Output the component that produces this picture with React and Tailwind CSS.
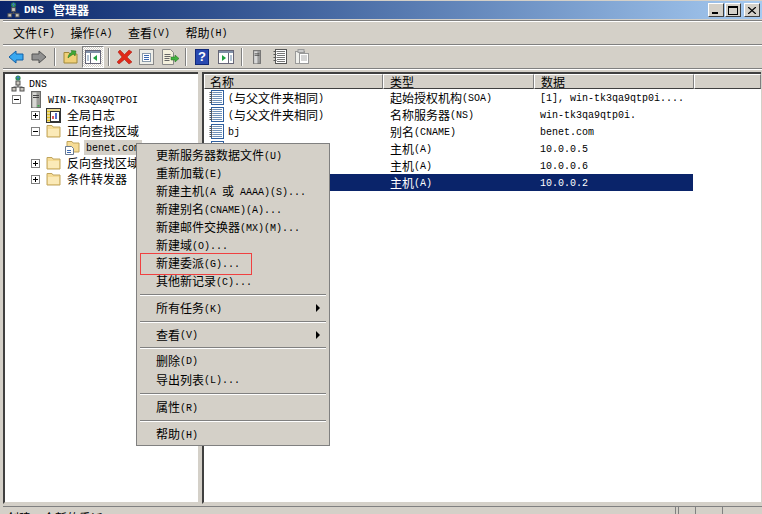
import React from 'react';

const CJK = '"Noto Sans CJK SC", sans-serif';

// CJK glyphs are 12px wide, latin ones 6px: two sizes in one string
function T({ children }) {
  const parts = children.split(/([\u4e00-\u9fff]+)/).filter(Boolean);
  return (
    <span className="inline-flex items-center whitespace-pre leading-[12px]">
      {parts.map((p, i) =>
        /[\u4e00-\u9fff]/.test(p)
          ? <span key={i} className="font-['Noto_Sans_CJK_SC',sans-serif] text-[12px]">{p}</span>
          : <span key={i} className="font-['Liberation_Mono',monospace] text-[10px] mt-[3px]">{p}</span>
      )}
    </span>
  );
}

function DnsIcon({ className }) {
  return (
    <svg viewBox="0 0 14 17" className={className}>
      <circle cx="7" cy="3" r="2.6" fill="#2f8f4f" />
      <path d="M5.5 2.5h3M7 .8v4" stroke="#3a78c8" strokeWidth="1" />
      <rect x="5" y="6" width="4" height="4" fill="#c8c4bc" stroke="#555" />
      <path d="M7 10v2M2.5 12h9" stroke="#555" />
      <rect x="1" y="12.5" width="4" height="3.5" fill="#c8c4bc" stroke="#555" />
      <rect x="9" y="12.5" width="4" height="3.5" fill="#c8c4bc" stroke="#555" />
    </svg>
  );
}

function ServerIcon({ className }) {
  return (
    <svg viewBox="0 0 10 17" className={className}>
      <rect x=".5" y=".5" width="9" height="16" fill="#9a9a96" stroke="#6a6a68" />
      <rect x="1.5" y="1.5" width="4" height="15" fill="#d8d8d4" />
      <path d="M2 4.500h6M2 6.500h6" stroke="#444" />
      <rect x="6.5" y="14" width="2" height="1.5" fill="#38b048" />
    </svg>
  );
}

function FolderIcon({ className }) {
  return (
    <svg viewBox="0 0 15 14" className={className}>
      <path d="M1 3V1.5h5L7 3h7v10H1z" fill="#f6dc96" stroke="#c0a45c" />
      <path d="M2 5h11v7H2z" fill="#fbeab8" />
    </svg>
  );
}

function DocFolderIcon({ className }) {
  return (
    <svg viewBox="0 0 15 15" className={className}>
      <path d="M2 3V1.5h5L8 3h6v9H2z" fill="#f6dc96" stroke="#c0a45c" />
      <path d="M.5 6.5h6l2 2v6h-8z" fill="#fff" stroke="#6a7a90" />
      <path d="M2 10.500h4M2 12.500h4" stroke="#3a68b0" />
    </svg>
  );
}

function LogIcon({ className }) {
  return (
    <svg viewBox="0 0 15 15" className={className}>
      <rect x=".5" y=".5" width="14" height="14" fill="#e8d890" stroke="#333" />
      <rect x="4.500" y="3.500" width="9" height="10" fill="#fff" stroke="#333" />
      <path d="M1 3.500h3M1 6.500h3M1 9.500h3M1 12.500h3" stroke="#e0c020" />
      <path d="M7 11V8" stroke="#d02020" strokeWidth="1.5" />
      <path d="M10 11V5" stroke="#2040c0" strokeWidth="1.5" />
    </svg>
  );
}

function RecordIcon({ className }) {
  return (
    <svg viewBox="0 0 15 15" className={className}>
      <rect x="2.5" y=".5" width="12" height="14" fill="#fff" stroke="#2f5f9f" />
      <path d="M4 2.500h9M4 4.500h9M4 6.500h9M4 8.500h9M4 10.500h9M4 12.500h9" stroke="#6f90b8" />
      <path d="M.5 2.500h3M.5 4.500h3M.5 6.500h3M.5 8.500h3M.5 10.500h3M.5 12.500h3" stroke="#555" />
    </svg>
  );
}

function Box({ open }) {
  return (
    <svg viewBox="0 0 9 9" className="w-[9px] h-[9px] shrink-0">
      <rect x=".5" y=".5" width="8" height="8" fill="#fff" stroke="#808080" />
      <path d="M2 4.500h5" stroke="#000" />
      {!open && <path d="M4.500 2v5" stroke="#000" />}
    </svg>
  );
}

function Sep() {
  return <div className="w-[2px] h-[18px] border-l border-l-[#808080] border-r border-r-white shrink-0" />;
}

const Arrow = ({ fill, stroke, flip }) => (
  <svg viewBox="0 0 16 14" className={`w-4 h-[14px] ${flip ? '-scale-x-100' : ''}`}>
    <path d="M1 7l7-6v3h7v6H8v3z" fill={fill} stroke={stroke} />
  </svg>
);

function Toolbar() {
  return (
    <div className="flex items-center h-[24px] pl-[5px] border-b border-b-[#808080] shadow-[0_1px_0_#fff]">
      <Arrow fill="#38a8f0" stroke="#1060a8" />
      <div className="w-[7px]" />
      <Arrow fill="#909090" stroke="#555" flip />
      <div className="w-[7px]" />
      <Sep />
      <svg viewBox="0 0 15 15" className="w-[15px] h-[15px] ml-[7px]">
        <path d="M1 5V3.5h5L7 5h7v9H1z" fill="#f0d078" stroke="#a08838" />
        <path d="M5 9c0-3 2-5 4-6L8 1.5l5 .5-1 5-1.5-2C9 6 7 7 5 9z" fill="#40a838" stroke="#207018" strokeWidth=".5" />
      </svg>
      <div className="w-[22px] h-[22px] ml-[4px] flex items-center justify-center border border-t-[#808080] border-l-[#808080] border-r-white border-b-white bg-[repeating-conic-gradient(#fff_0_25%,#d4d0c8_0_50%)] bg-[length:2px_2px]">
        <svg viewBox="0 0 16 14" className="w-4 h-[14px]">
          <rect x=".5" y=".5" width="15" height="13" fill="#fff" stroke="#667" />
          <rect x="1" y="1" width="14" height="2" fill="#8090a8" />
          <path d="M5.5 3v10" stroke="#667" />
          <path d="M2 6h2M2 8h2M2 10h2" stroke="#68a" />
          <path d="M12 5v6L8 8z" fill="#20a040" />
        </svg>
      </div>
      <div className="w-[4px]" />
      <Sep />
      <svg viewBox="0 0 17 16" className="w-[17px] h-4 ml-[6px]">
        <path d="M2 3l2-2 4.500 4.500L13 1l3 2-5 5 5 5-3 2-4.500-4.500L3 15l-2-2 5-5z" fill="#e02818" stroke="#a01810" strokeWidth=".5" />
      </svg>
      <svg viewBox="0 0 15 16" className="w-[15px] h-4 ml-[6px]">
        <rect x=".5" y=".5" width="14" height="15" fill="#eeeee8" stroke="#888" />
        <rect x="3.500" y="4.500" width="8" height="8" fill="#fff" stroke="#8899aa" />
        <path d="M5 6.500h5M5 8.500h5M5 10.500h5" stroke="#3a68b0" />
      </svg>
      <svg viewBox="0 0 17 16" className="w-[17px] h-4 ml-[8px]">
        <path d="M.5.5h8l3 3v12H.5z" fill="#f4f0dc" stroke="#888" />
        <path d="M2.500 5.500h6M2.500 7.500h6M2.500 9.500h5M2.500 11.500h5" stroke="#666" />
        <path d="M9 8h4V6l4 3.500-4 3.500v-2H9z" fill="#40b040" stroke="#207018" strokeWidth=".5" />
      </svg>
      <div className="w-[6px]" />
      <Sep />
      <div className="w-[14px] h-[16px] ml-[8px] bg-[#2848b0] border border-[#102878] flex items-center justify-center font-['Liberation_Sans',sans-serif] text-[13px] font-bold text-white leading-none">?</div>
      <svg viewBox="0 0 16 14" className="w-4 h-[14px] ml-[9px]">
        <rect x=".5" y=".5" width="15" height="13" fill="#fff" stroke="#667" />
        <rect x="1" y="1" width="14" height="2" fill="#8090a8" />
        <path d="M10.500 3v10" stroke="#667" />
        <path d="M4 5v6l4-3z" fill="#20a040" />
        <path d="M12 6h2M12 8h2M12 10h2" stroke="#68a" />
      </svg>
      <div className="w-[7px]" />
      <Sep />
      <ServerIcon className="w-[8px] h-[16px] ml-[10px] grayscale" />
      <svg viewBox="0 0 14 15" className="w-[14px] h-[15px] ml-[12px]">
        <rect x="2.500" y=".5" width="11" height="14" fill="#fff" stroke="#555" />
        <path d="M4 2.500h8M4 4.500h8M4 6.500h8M4 8.500h8M4 10.500h8M4 12.500h8" stroke="#777" />
        <path d="M.5 2.500h3M.5 5.500h3M.5 8.500h3M.5 11.500h3" stroke="#555" />
      </svg>
      <svg viewBox="0 0 14 15" className="w-[14px] h-[15px] ml-[8px]">
        <rect x=".5" y="2.500" width="9" height="12" fill="#f0f0ec" stroke="#999" />
        <rect x="4.500" y="4.500" width="9" height="10" fill="#fff" stroke="#999" />
        <rect x="3" y=".5" width="6" height="3" fill="#ccc" stroke="#999" />
        <path d="M6 7h6M6 9h6M6 11h6" stroke="#aaa" />
      </svg>
    </div>
  );
}

const treeRows = [
  { label: 'DNS', pl: 'pl-[6px]', icon: <DnsIcon className="w-[14px] h-[17px]" />, gap: 'gap-[4px]' },
  { label: 'WIN-TK3QA9QTPOI', pl: 'pl-[7px]', box: 'open', icon: <ServerIcon className="w-[10px] h-[17px]" />, gap: 'gap-[7px]', boxGap: 'mr-[10px]' },
  { label: '全局日志', pl: 'pl-[26px]', box: 'closed', icon: <LogIcon className="w-[15px] h-[15px]" />, gap: 'gap-[6px]', boxGap: 'mr-[6px]' },
  { label: '正向查找区域', pl: 'pl-[26px]', box: 'open', icon: <FolderIcon className="w-[15px] h-[14px]" />, gap: 'gap-[6px]', boxGap: 'mr-[6px]' },
  { label: 'benet.com', pl: 'pl-[60px]', icon: <DocFolderIcon className="w-[15px] h-[15px]" />, gap: 'gap-[4px]', sel: true },
  { label: '反向查找区域', pl: 'pl-[26px]', box: 'closed', icon: <FolderIcon className="w-[15px] h-[14px]" />, gap: 'gap-[6px]', boxGap: 'mr-[6px]' },
  { label: '条件转发器', pl: 'pl-[26px]', box: 'closed', icon: <FolderIcon className="w-[15px] h-[14px]" />, gap: 'gap-[6px]', boxGap: 'mr-[6px]' },
];

function Tree() {
  return (
    <div className="w-[195px] shrink-0 bg-white border-t-2 border-l-2 border-t-[#404040] border-l-[#404040] border-b-2 border-b-[#d4d0c8] overflow-hidden pt-[1px]">
      {treeRows.map(r => (
        <div key={r.label} className={`flex items-center h-[16px] whitespace-nowrap ${r.pl}`}>
          {r.box && <span className={`flex ${r.boxGap}`}><Box open={r.box === 'open'} /></span>}
          <span className={`flex items-center ${r.gap}`}>
            {r.icon}
            <span className={r.sel ? 'bg-[#d4d0c8] px-[2px] h-[15px] w-[58px] flex items-center' : 'flex items-center'}><T>{r.label}</T></span>
          </span>
        </div>
      ))}
    </div>
  );
}

const listRows = [
  { name: '(与父文件夹相同)', type: '起始授权机构(SOA)', data: '[1], win-tk3qa9qtp0i....' },
  { name: '(与父文件夹相同)', type: '名称服务器(NS)', data: 'win-tk3qa9qtp0i.' },
  { name: 'bj', type: '别名(CNAME)', data: 'benet.com' },
  { name: '', type: '主机(A)', data: '10.0.0.5' },
  { name: '', type: '主机(A)', data: '10.0.0.6' },
  { name: '', type: '主机(A)', data: '10.0.0.2', sel: true },
];

function HeaderCell({ label, className }) {
  return (
    <div className={`h-[15px] flex items-center overflow-hidden border border-t-white border-l-white border-r-[#808080] border-b-[#404040] bg-[#d4d0c8] ${className}`}>
      {label && <T>{label}</T>}
    </div>
  );
}

function List() {
  return (
    <div className="flex-1 min-w-0 bg-white border-t-2 border-l-2 border-t-[#404040] border-l-[#404040] border-b-2 border-b-[#d4d0c8] overflow-hidden">
      <div className="flex">
        <HeaderCell label="名称" className="w-[179px] pl-[5px]" />
        <HeaderCell label="类型" className="w-[151px] pl-[6px]" />
        <HeaderCell label="数据" className="w-[160px] pl-[6px]" />
        <HeaderCell className="flex-1" />
      </div>
      {listRows.map((r, i) => (
        <div key={i} className={`flex items-center h-[17px] w-[489px] ${r.sel ? 'bg-[#0a246a] text-white' : ''}`}>
          <div className="w-[179px] pl-[5px] flex items-center gap-[4px]">
            {!r.sel && <RecordIcon className="w-[15px] h-[15px]" />}
            <T>{r.name}</T>
          </div>
          <div className="w-[151px] pl-[7px] flex items-center"><T>{r.type}</T></div>
          <div className="pl-[6px] flex items-center"><T>{r.data}</T></div>
        </div>
      ))}
    </div>
  );
}

const menuGroups = [
  { cls: 'mx-[1px] pb-[4px]', row: 'h-[18px]', items: ['更新服务器数据文件(U)', '重新加载(E)', '新建主机(A 或 AAAA)(S)...', '新建别名(CNAME)(A)...', '新建邮件交换器(MX)(M)...', '新建域(O)...', '新建委派(G)...', '其他新记录(C)...'] },
  { cls: 'mx-[1px] pt-[3px] pb-[3px]', row: 'h-[20px]', items: ['所有任务(K)'], arrow: true },
  { cls: 'mx-[1px] pt-[3px] pb-[3px]', row: 'h-[19px]', items: ['查看(V)'], arrow: true },
  { cls: 'mx-[1px] pt-[3px] pb-[4px]', row: 'h-[19px]', items: ['删除(D)', '导出列表(L)...'] },
  { cls: 'mx-[1px] pt-[3px] pb-[3px]', row: 'h-[20px]', items: ['属性(R)'] },
  { cls: 'mx-[1px] pt-[3px] pb-[3px]', row: 'h-[20px]', items: ['帮助(H)'] },
];

function ContextMenu() {
  return (
    <div className="absolute left-[136px] top-[143px] w-[194px] h-[303px] bg-[#d4d0c8] border border-[#808080] pt-[2px] px-[2px]">
      {menuGroups.map((g, gi) => (
        <div key={gi} className={`${g.cls} ${gi > 0 ? 'border-t border-t-[#808080] shadow-[inset_0_1px_0_#fff]' : ''}`}>
          {g.items.map(item => (
            <div key={item} className={`relative flex items-center pl-[16px] ${g.row}`}>
              <T>{item}</T>
              {g.arrow && <span className="absolute right-[6px] w-0 h-0 border-y-[4px] border-y-transparent border-l-[4px] border-l-black" />}
            </div>
          ))}
        </div>
      ))}
      {/* red annotation around 新建委派 */}
      <div className="absolute left-[3px] top-[109px] w-[112px] h-[22px] border border-[#f04040]" />
    </div>
  );
}

function WinButton({ children }) {
  return (
    <div className="w-[16px] h-[14px] bg-[#d4d0c8] border border-t-white border-l-white border-r-[#404040] border-b-[#404040] flex items-center justify-center">
      {children}
    </div>
  );
}

export default function App() {
  return (
    <div className="relative w-[762px] h-[514px] overflow-hidden bg-[#d4d0c8] text-black flex flex-col pt-[1px]" style={{ fontFamily: CJK }}>
      {/* title bar */}
      <div className="h-[18px] shrink-0 flex items-center justify-between pl-[7px] pr-[2px] bg-gradient-to-r from-[#0a246a] to-[#a6caf0] text-white font-bold">
        <div className="flex items-center gap-[4px]">
          <DnsIcon className="w-[13px] h-[16px]" />
          <span className="font-['Liberation_Mono',monospace] text-[11px] leading-[12px] w-[25px]">DNS</span>
          <span className="font-['Noto_Sans_CJK_SC',sans-serif] text-[12px] leading-[12px]">管理器</span>
        </div>
        <div className="flex items-center gap-[1px]">
          <WinButton><span className="w-[6px] h-[2px] bg-black mt-[6px] mr-[2px]" /></WinButton>
          <WinButton><span className="w-[10px] h-[9px] border border-black border-t-2" /></WinButton>
          <div className="w-[1px]" />
          <WinButton>
            <svg viewBox="0 0 8 7" className="w-[8px] h-[7px]"><path d="M0 0l8 7M8 0L0 7" stroke="#000" strokeWidth="1.300" /></svg>
          </WinButton>
        </div>
      </div>

      {/* menu + tool bars */}
      <div className="shrink-0 mt-[1px] ml-[3px] border-t border-t-[#808080] shadow-[inset_0_1px_0_#fff]">
        <div className="h-[24px] flex items-center pl-[10px] gap-[15.500px] border-b border-b-[#808080] shadow-[0_1px_0_#fff]">
          <T>文件(F)</T>
          <T>操作(A)</T>
          <T>查看(V)</T>
          <T>帮助(H)</T>
        </div>
        <Toolbar />
      </div>

      {/* tree and list panes */}
      <div className="flex-1 min-h-0 flex gap-[4px] mt-[3px] pl-[3px] pr-[1px]">
        <Tree />
        <List />
      </div>

      {/* status bar, almost off the bottom of the window */}
      <div className="h-[8px] shrink-0 mt-[2px] ml-[3px] flex items-start border-t border-t-[#808080] overflow-hidden">
        <div className="w-[672px] pl-[4px] pt-[3px] flex items-start"><T>创建一个新的委派。</T></div>
        <div className="w-[3px] h-full border-l border-l-[#808080]" />
        <div className="w-[17px] h-full border-l border-l-[#808080]" />
        <div className="w-[27px] h-full border-l border-l-[#808080]" />
        <div className="flex-1 h-full border-l border-l-[#808080]" />
      </div>

      <ContextMenu />
    </div>
  );
}
